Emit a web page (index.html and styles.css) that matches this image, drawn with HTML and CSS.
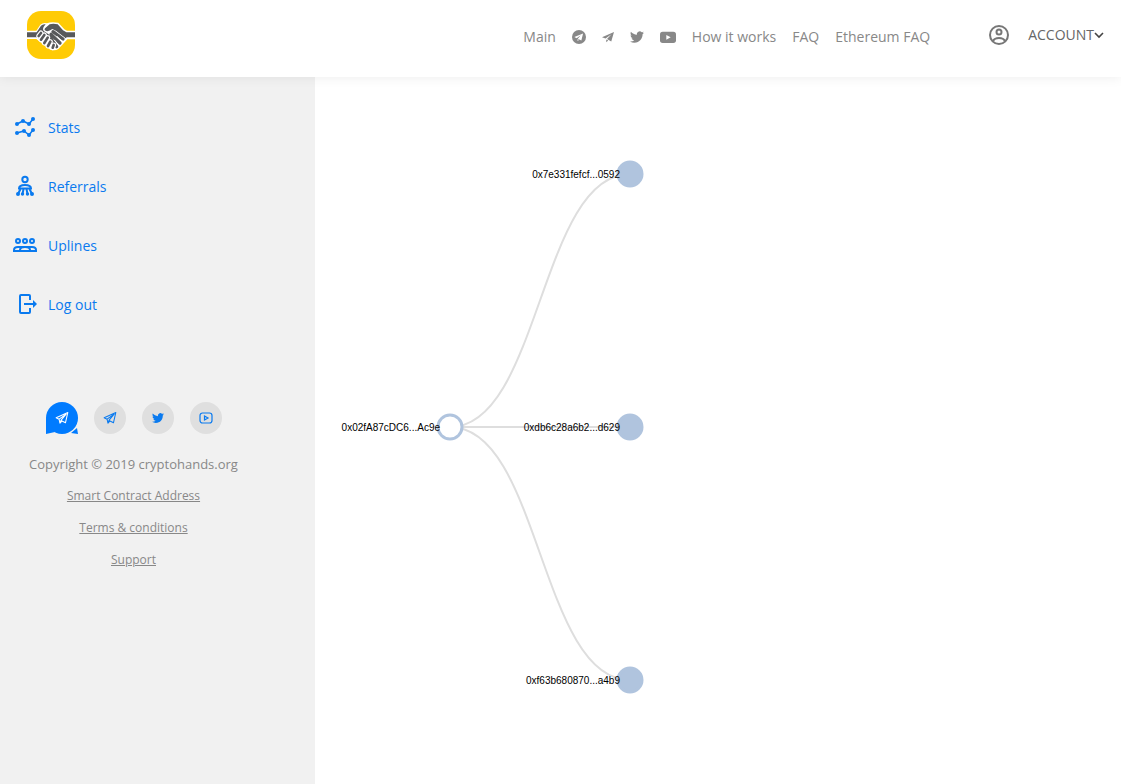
FILE: index.html
```html
<!DOCTYPE html>
<html lang="en">
<head>
    <meta charset="UTF-8">
    <meta name="viewport" content="width=device-width, initial-scale=1.0">
    <title>CryptoHands - Referrals</title>
    <link rel="stylesheet" href="styles.css">
</head>
<body>
    <!-- shared icons -->
    <svg class="sprite" aria-hidden="true">
        <symbol id="icon-plane" viewBox="0 0 24 24">
            <path d="M24 2 L0 12.500 L7 15 L19 6.500 L10 16 L18.500 21 Z M8.500 17 V22.500 L12.500 19 Z"/>
        </symbol>
        <symbol id="icon-plane-line" viewBox="0 0 24 24">
            <path d="M22 2.500 L2 11.500 L7 14 L8.500 21 L12 17 L18 20 Z M7 14 L19 5.500 L10.500 15.500 L8.500 21 M10.500 15.500 L12 17" fill="none" stroke="currentColor" stroke-width="1.800" stroke-linejoin="round"/>
        </symbol>
        <symbol id="icon-twitter" viewBox="0 0 24 24">
            <path d="M23.950 4.570a10 10 0 0 1-2.820.770 4.960 4.960 0 0 0 2.160-2.720c-.950.550-2 .950-3.130 1.180a4.920 4.920 0 0 0-8.380 4.480C7.690 8.090 4.070 6.130 1.640 3.160a4.820 4.820 0 0 0-.670 2.470c0 1.710.870 3.210 2.190 4.100a4.900 4.900 0 0 1-2.230-.620v.060a4.920 4.920 0 0 0 3.950 4.830 5 5 0 0 1-2.210.080 4.940 4.940 0 0 0 4.600 3.420A9.870 9.870 0 0 1 0 19.540a14 14 0 0 0 7.550 2.210c9.050 0 14-7.500 14-13.980l-.020-.640a9.900 9.900 0 0 0 2.420-2.560z"/>
        </symbol>
    </svg>

    <header class="header">
        <a class="logo" href="#" aria-label="CryptoHands">
            <svg viewBox="0 0 144 144">
                <rect width="144" height="144" rx="42" fill="#ffcb05"/>
                <path d="M0 59H28L40 41Q48 34 60 37Q72 31 94 35L112 55L120 59H144V85H121L113 94L94 114Q84 121 70 116L28 84H0Z" fill="#fff"/>
                <path d="M0 64H29L42 44Q48 38 56 40Q44 52 50 60L72 74L84 88L68 98L38 84L29 79H0Z" fill="#58595b"/>
                <path d="M144 64H118L108 58L92 40Q78 36 68 40L54 52Q50 58 58 60Q66 62 76 54L88 60L116 82L119 79H144Z" fill="#58595b"/>
                <g fill="none" stroke-linecap="round">
                    <path d="M76 64L108 84M72 72L99 96M68 80L89 107" stroke="#fff" stroke-width="13"/>
                    <path d="M78 62L108 84M72 70L99 96M68 78L89 107" stroke="#58595b" stroke-width="10"/>
                    <path d="M90 76L103 89M83 88L92 99" stroke="#fff" stroke-width="3"/>
                    <path d="M42 66L35 75M52 72L42 86M62 80L52 96M70 92L63 105M80 102L77 110" stroke="#fff" stroke-width="15"/>
                    <path d="M42 66L35 75M52 72L42 86M62 80L52 96M70 92L63 105M80 102L77 110" stroke="#58595b" stroke-width="8"/>
                </g>
            </svg>
        </a>

        <nav class="nav">
            <a href="#">Main</a>
            <a href="#" aria-label="Telegram chat">
                <svg class="icon-14" viewBox="0 0 24 24">
                    <circle cx="12" cy="12" r="12"/>
                    <path d="M19 6L4 12L8 14L15 9L10 15L16 18Z M9.500 15.500V19L12 17Z" fill="#fff"/>
                </svg>
            </a>
            <a href="#" aria-label="Telegram channel"><svg class="icon-12"><use href="#icon-plane"/></svg></a>
            <a href="#" aria-label="Twitter"><svg class="icon-14"><use href="#icon-twitter"/></svg></a>
            <a href="#" aria-label="YouTube">
                <svg class="icon-16" viewBox="0 0 24 24">
                    <rect y="4" width="24" height="17" rx="4"/>
                    <path d="M9.500 9V16L16 12.500Z" fill="#fff"/>
                </svg>
            </a>
            <a href="#">How it works</a>
            <a href="#">FAQ</a>
            <a href="#">Ethereum FAQ</a>
        </nav>

        <button class="account" type="button">
            <svg class="account-icon" viewBox="0 0 20 20">
                <g fill="none" stroke="currentColor" stroke-width="2">
                    <circle cx="10" cy="10" r="9"/>
                    <circle cx="10" cy="7" r="2.500"/>
                    <path d="M4 16Q5.500 13 10 13T16 16"/>
                </g>
            </svg>
            <span>ACCOUNT</span>
            <svg class="chevron" viewBox="0 0 10 10"><path d="M1 3L5 7L9 3" fill="none" stroke="#444" stroke-width="1.600"/></svg>
        </button>
    </header>

    <div class="layout">
        <aside class="sidebar">
            <nav class="menu">
                <a href="#">
                    <svg viewBox="0 0 24 24">
                        <path d="M4 8L10 5L16 8L20 3M4 17L11 15L16 19L20 14" fill="none" stroke="currentColor" stroke-width="1.600"/>
                        <circle cx="4" cy="8" r="2"/><circle cx="10" cy="5" r="2"/><circle cx="16" cy="8" r="2"/><circle cx="20" cy="3" r="2"/>
                        <circle cx="4" cy="17" r="2"/><circle cx="11" cy="15" r="2"/><circle cx="16" cy="19" r="2"/><circle cx="20" cy="14" r="2"/>
                    </svg>
                    Stats
                </a>
                <a href="#">
                    <svg viewBox="0 0 24 24">
                        <g fill="none" stroke="currentColor" stroke-width="2">
                            <circle cx="12" cy="4.500" r="2.700"/>
                            <path d="M6 13.500Q6 10 12 10T18 13.500Z"/>
                            <path d="M7.500 14L5 19M10.500 14L9.500 19M13.500 14L14.500 19M16.500 14L19 19"/>
                        </g>
                        <circle cx="5" cy="19" r="2"/><circle cx="9.500" cy="19" r="1.700"/><circle cx="14.500" cy="19" r="1.700"/><circle cx="19" cy="19" r="2"/>
                    </svg>
                    Referrals
                </a>
                <a href="#">
                    <svg viewBox="0 0 24 24">
                        <g fill="none" stroke="currentColor" stroke-width="2">
                            <circle cx="5" cy="7" r="2"/><circle cx="12" cy="7" r="2"/><circle cx="19" cy="7" r="2"/>
                            <path d="M1 18V16Q1 13 5 13H19Q23 13 23 16V18M7 18V16Q7 13 12 13T17 16V18M0 17H24"/>
                        </g>
                    </svg>
                    Uplines
                </a>
                <a href="#">
                    <svg viewBox="0 0 24 24">
                        <path d="M17 7V3Q17 2 16 2H8Q7 2 7 3V19Q7 20 8 20H16Q17 20 17 19V15M11 11H23" fill="none" stroke="currentColor" stroke-width="2"/>
                        <path d="M20 7L24 11L20 15Z"/>
                    </svg>
                    Log out
                </a>
            </nav>

            <footer class="footer">
                <div class="socials">
                    <a class="chat" href="#" aria-label="Telegram chat">
                        <svg class="bubble" viewBox="0 0 32 32">
                            <circle cx="16" cy="16" r="16"/>
                            <path d="M0 16V32L9 30ZM31 26L32 32L25 31Z"/>
                        </svg>
                        <svg class="icon-14"><use href="#icon-plane-line"/></svg>
                    </a>
                    <a href="#" aria-label="Telegram channel"><svg class="icon-14"><use href="#icon-plane-line"/></svg></a>
                    <a href="#" aria-label="Twitter"><svg class="icon-12"><use href="#icon-twitter"/></svg></a>
                    <a href="#" aria-label="YouTube">
                        <svg class="icon-14" viewBox="0 0 14 14">
                            <g fill="none" stroke="currentColor" stroke-width="1.200">
                                <rect x="1" y="2" width="12" height="10" rx="2.500"/>
                                <path d="M5.500 5V9L9 7Z"/>
                            </g>
                        </svg>
                    </a>
                </div>
                <p>Copyright © 2019 cryptohands.org</p>
                <a href="#">Smart Contract Address</a>
                <a href="#">Terms &amp; conditions</a>
                <a href="#">Support</a>
            </footer>
        </aside>

        <main class="content">
            <svg class="tree" width="500" height="700">
                <g transform="translate(135,350)">
                    <path class="link" d="M180,-253C90,-253 90,0 0,0"/>
                    <path class="link" d="M180,0C90,0 90,0 0,0"/>
                    <path class="link" d="M180,253C90,253 90,0 0,0"/>
                    <g class="node open">
                        <circle r="12"/>
                        <text x="-10" dy="4">0x02fA87cDC6...Ac9e</text>
                    </g>
                    <g class="node" transform="translate(180,-253)">
                        <circle r="12"/>
                        <text x="-10" dy="4">0x7e331fefcf...0592</text>
                    </g>
                    <g class="node" transform="translate(180,0)">
                        <circle r="12"/>
                        <text x="-10" dy="4">0xdb6c28a6b2...d629</text>
                    </g>
                    <g class="node" transform="translate(180,253)">
                        <circle r="12"/>
                        <text x="-10" dy="4">0xf63b680870...a4b9</text>
                    </g>
                </g>
            </svg>
        </main>
    </div>
</body>
</html>
```

FILE: styles.css
```css
* {
    box-sizing: border-box;
}
body {
    margin: 0;
    min-height: 100vh;
    display: flex;
    flex-direction: column;
    font-family: "Open Sans", "Noto Sans", sans-serif;
    font-size: 14px;
    line-height: 20px;
    color: #888;
    background-color: #fff;
}
a {
    color: inherit;
    text-decoration: none;
}
svg {
    display: block;
    fill: currentColor;
}
.sprite {
    position: absolute;
    width: 0;
    height: 0;
}
.icon-12 {
    width: 12px;
    height: 12px;
}
.icon-14 {
    width: 14px;
    height: 14px;
}
.icon-16 {
    width: 16px;
    height: 16px;
}

/* Header */
.header {
    position: relative;
    display: flex;
    align-items: center;
    height: 77px;
    padding: 0 17px 7px 27px;
    background-color: #fff;
    box-shadow: 0 0 12px rgba(0, 0, 0, 0.08);
}
.logo {
    width: 48px;
    margin-right: auto;
}
.nav {
    display: flex;
    align-items: center;
    gap: 16px;
    padding-top: 3px;
}
.account {
    display: flex;
    align-items: center;
    margin-left: 59px;
    padding: 0;
    border: none;
    background: none;
    font: inherit;
    color: #666;
    cursor: pointer;
}
.account-icon {
    width: 20px;
    height: 20px;
    margin-right: 19px;
    color: #777;
}
.chevron {
    width: 10px;
    height: 10px;
}

/* Sidebar */
.layout {
    flex: 1;
    display: flex;
}
.sidebar {
    flex: 0 0 315px;
    background-color: #f1f1f1;
}
.menu {
    display: flex;
    flex-direction: column;
    gap: 35px;
    padding: 39px 13px 0;
    color: #0a7aef;
}
.menu a {
    display: flex;
    align-items: center;
    gap: 11px;
    height: 24px;
}
.menu svg {
    width: 24px;
    height: 24px;
}
.footer {
    display: flex;
    flex-direction: column;
    align-items: center;
    gap: 12px;
    width: 267px;
    margin-top: 85px;
    font-size: 12px;
}
.footer p {
    margin: 8px 0 0;
    font-size: 13px;
}
.footer > a {
    text-decoration: underline;
}
.socials {
    display: flex;
    gap: 16px;
}
.socials a {
    position: relative;
    display: flex;
    align-items: center;
    justify-content: center;
    width: 32px;
    height: 32px;
    border-radius: 50%;
    background-color: #dfdfdf;
    color: #0a7aef;
}
.socials .chat {
    z-index: 0;
    background: none;
    color: #fff;
}
.bubble {
    position: absolute;
    inset: 0;
    z-index: -1;
    color: #007bff;
}

/* Referral tree */
.content {
    flex: 1;
    min-width: 0;
}
.link {
    fill: none;
    stroke: #dedede;
    stroke-width: 2px;
}
.node circle {
    fill: lightsteelblue;
    stroke: lightsteelblue;
    stroke-width: 3px;
}
.node.open circle {
    fill: #fff;
}
.node text {
    font: 10px "Liberation Sans", Arial, sans-serif;
    fill: #000;
    text-anchor: end;
}
```
